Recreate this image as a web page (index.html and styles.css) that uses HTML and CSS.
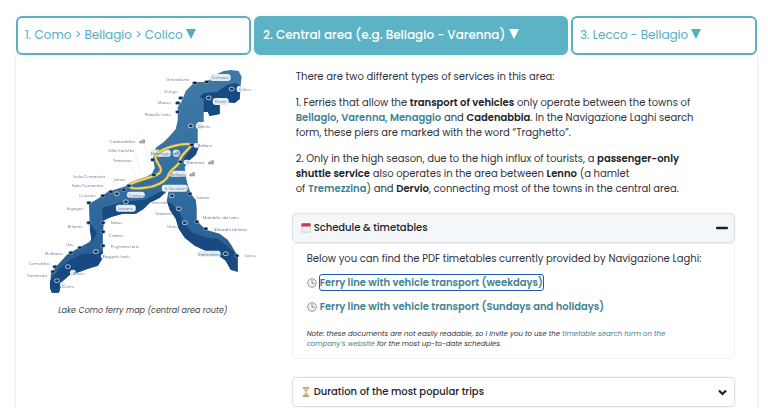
FILE: index.html
```html
<!DOCTYPE html>
<html lang="en">
<head>
<meta charset="utf-8">
<meta name="viewport" content="width=device-width, initial-scale=1">
<title>Lake Como ferry lines</title>
<link rel="stylesheet" href="styles.css">
</head>
<body>
<main class="page">
  <div class="tabs" role="tablist">
    <button class="tab" role="tab" aria-selected="false">1. Como &gt; Bellagio &gt; Colico <svg class="tri" viewBox="0 0 10 10" aria-hidden="true"><path d="M0 0H10L5 10Z"/></svg></button>
    <button class="tab active" role="tab" aria-selected="true">2. Central area (e.g. Bellagio - Varenna) <svg class="tri" viewBox="0 0 10 10" aria-hidden="true"><path d="M0 0H10L5 10Z"/></svg></button>
    <button class="tab" role="tab" aria-selected="false">3. Lecco - Bellagio <svg class="tri" viewBox="0 0 10 10" aria-hidden="true"><path d="M0 0H10L5 10Z"/></svg></button>
  </div>
  <section class="panel" role="tabpanel">
    <figure class="map">
      <svg viewBox="16 60 254 236" role="img" aria-label="Lake Como ferry map">
        <defs>
          <linearGradient id="water" x1="0" y1="0" x2="0" y2="1">
            <stop offset="0" stop-color="#3f7aa6"/>
            <stop offset=".5" stop-color="#336f9f"/>
            <stop offset="1" stop-color="#24588f"/>
          </linearGradient>
          <g id="pier"><rect x="-2.2" y="-1.5" width="4.4" height="3" rx="1.3" fill="#0c2450" stroke="#9cbad2" stroke-width=".6"/></g>
          <g id="ring"><rect x="-2.4" y="-1.8" width="4.8" height="3.6" rx="1.7" fill="#143766" stroke="#dce9f3" stroke-width=".8"/></g>
          <path id="car" d="M0 2V0.300H1.700L2.700-1H4.700V2Z" fill="#a9b8c8" stroke="#607791" stroke-width=".6"/>
        </defs>
        <path fill="url(#water)" d="M231 69L239 70L242 76L241 84L240 91L240 98L235 102L227 101L220 104V113L210 115L208 111H204V121H198V140L199 147L196 154L189 160L185 166L186 176L188 184L191 193L196 199L197 207L197 220L206 229L213 231L220 233L228 239L232 245L236 252L238 258L238 271L231 269L226 260L217 253L206 250L195 245L185 237L179 228L176 218L170 209L167 200L169 189L160 197L150 202L144 208L136 213H123L112 216L104 220L103 235L103 257L98 265L88 268L80 271L70 274L62 281L59 292H52L50 287L51 273L57 265L67 254L79 247L90 241L93 234L90 229L89 203L98 198L108 191L124 186L140 180L152 173L155 167L153 157L156 147L164 141L169 136L176 128L178 119V106L182 100L186 90L195 81H207L215 74L224 70Z"/>
        <path fill="#174a82" d="M241 85L240 98L235 102L227 101L220 104V113L210 115L208 111H204V98L200 96L204 92L217 91L227 84L236 82Z"/>
        <path fill="#184b83" d="M168 189L160 197L150 202L144 208L136 213H123L112 216L103 219L102 207L110 205L124 201L145 199L158 192Z"/>
        <path fill="#184b83" d="M184 158L192 146L199 145L196 154L188 161L185 166Z"/>
        <path fill="#184a81" d="M172 203L180 212L184 222L193 232L207 237L218 238L227 245L238 254V271L231 269L226 260L217 253L206 250L195 245L185 237L179 228L176 218L170 209L167 200Z"/>
        <path fill="#184a81" d="M103 250V257L98 265L88 268L80 271L70 274L62 281L59 292H52L50 287V280L61 267L70 259L83 253L95 253ZM91 223L97 233L92 241L90 230Z"/>
        <path d="M143 138L152 169M134 150L142 173M127 158L137 177M108 175L116 184M99 184L106 188" fill="none" stroke="#dce1e9" stroke-width=".5"/>
        <g fill="#e3edf6">
          <rect x="210" y="73" width="21" height="7" rx="3"/><rect x="213" y="97" width="16" height="7" rx="3"/>
          <rect x="237" y="85" width="5" height="6" rx="2"/><rect x="196" y="122" width="8" height="6" rx="3"/>
          <rect x="150" y="149" width="21" height="7" rx="3"/><rect x="173" y="149" width="7" height="7" rx="3"/>
          <rect x="169" y="170" width="18" height="6" rx="3"/><rect x="162" y="184" width="26" height="7" rx="3"/>
          <rect x="127" y="191" width="18" height="6" rx="3"/><rect x="116" y="204" width="20" height="7" rx="3"/>
          <rect x="198" y="250" width="23" height="6" rx="3"/><rect x="70" y="269" width="6" height="6" rx="3"/>
          <rect x="60" y="281" width="5" height="6" rx="3"/><rect x="101" y="253" width="5" height="5" rx="2"/>
          <rect x="194" y="142" width="6" height="5" rx="2"/><rect x="184" y="159" width="6" height="5" rx="2"/>
        </g>
        <g fill="none" stroke-linejoin="round">
          <path d="M192 143.500C181 142 164 147 157 153C152 159 162 164 161 170C161 176 135 179 130 184C127 188 137 188 145 187C156 186 165 181 168 176C169 169 177 167 180 161C179 154 191 148 192 143.500Z" stroke="#8f8a52" stroke-width="3"/>
          <path d="M192 143.500C181 142 164 147 157 153C152 159 162 164 161 170C161 176 135 179 130 184C127 188 137 188 145 187C156 186 165 181 168 176C169 169 177 167 180 161C179 154 191 148 192 143.500Z" stroke="#f4d35a" stroke-width="2"/>
        </g>
        <g>
          <use href="#pier" x="195" y="82"/><use href="#pier" x="207" y="81"/><use href="#pier" x="181" y="97"/><use href="#pier" x="178" y="102"/><use href="#pier" x="178" y="111"/>
          <use href="#ring" x="232" y="88"/><use href="#ring" x="209" y="97"/><use href="#ring" x="191" y="125"/>
          <use href="#pier" x="192" y="144"/><use href="#pier" x="153" y="159"/><use href="#pier" x="181" y="161"/><use href="#pier" x="154" y="174"/>
          <use href="#pier" x="129" y="185"/><use href="#pier" x="124" y="189"/><use href="#pier" x="111" y="191"/><use href="#ring" x="117" y="193"/><use href="#pier" x="103" y="195"/><use href="#pier" x="89" y="202"/><use href="#ring" x="126" y="201"/>
          <use href="#pier" x="89" y="222"/><use href="#pier" x="103" y="222"/><use href="#pier" x="103" y="231"/><use href="#pier" x="103" y="245"/><use href="#pier" x="80" y="247"/><use href="#pier" x="71" y="252"/><use href="#ring" x="96" y="251"/>
          <use href="#pier" x="55" y="266"/><use href="#pier" x="53" y="271"/><use href="#ring" x="68" y="266"/><use href="#ring" x="57" y="280"/>
          <use href="#ring" x="172" y="195"/><use href="#pier" x="190" y="193"/><use href="#ring" x="179" y="208"/><use href="#ring" x="185" y="222"/><use href="#pier" x="197" y="221"/><use href="#pier" x="206" y="228"/><use href="#ring" x="226" y="253"/><use href="#pier" x="237" y="255"/>
        </g>
        <g class="piers end">
          <text x="189" y="80">Gravedona</text><text x="178" y="92">Dongo</text><text x="171" y="103">Musso</text><text x="171" y="115">Pianello Lario</text>
          <text x="135" y="142">Cadenabbia</text><text x="134" y="151">Villa Carlotta</text><text x="132" y="161">Tremezzo</text><text x="126" y="180">Lenno</text>
          <text x="105" y="177">Isola Comacina</text><text x="103" y="186">Sala Comacina</text><text x="96" y="196">Colonno</text><text x="84" y="209">Argegno</text><text x="83" y="227">Brienno</text>
          <text x="74" y="245">Urio</text><text x="63" y="254">Moltrasio</text><text x="50" y="264">Cernobbio</text><text x="47" y="276">Tavernola</text>
          <text x="168" y="203">Limonta</text><text x="173" y="214">Vassena</text><text x="178" y="227">Onno</text>
        </g>
        <g class="piers">
          <text x="212" y="78">Domaso</text><text x="239" y="90">Colico</text><text x="215" y="102">Piona</text><text x="198" y="127">Dervio</text><text x="198" y="146">Bellano</text><text x="187" y="163">Varenna</text>
          <text x="151" y="154">Menaggio</text><text x="171" y="175">Bellagio</text><text x="165" y="189">S. Giovanni</text><text x="129" y="196">Campo</text><text x="118" y="209">Lezzeno</text>
          <text x="111" y="223">Nesso</text><text x="109" y="236">Careno</text><text x="111" y="247">Pognana Lario</text><text x="103" y="257">Faggeto Lario</text><text x="73" y="274">Blevio</text><text x="62" y="287">Como</text>
          <text x="197" y="198">Lierna</text><text x="203" y="218">Mandello del Lario</text><text x="214" y="230">Abbadia Lariana</text><text x="198" y="255">Valmadrera</text><text x="245" y="256">Lecco</text>
        </g>
        <use href="#car" x="140" y="140"/><use href="#car" x="209" y="161"/><use href="#car" x="190" y="173"/><use href="#car" x="174" y="152"/>
      </svg>
      <figcaption>Lake Como ferry map (central area route)</figcaption>
    </figure>
    <div class="content">
      <div class="copy">
        <p>There are two different types of services in this area:</p>
        <p>1. Ferries that allow the <strong>transport of vehicles</strong> only operate between the towns of <br><a href="#">Bellagio</a>, <a href="#">Varenna</a>, <a href="#">Menaggio</a> and <strong>Cadenabbia</strong>. In the Navigazione Laghi search <br>form, these piers are marked with the word “Traghetto”.</p>
        <p>2. Only in the high season, due to the high influx of tourists, a <strong>passenger-only <br>shuttle service</strong> also operates in the area between <strong>Lenno</strong> (a hamlet <br>of&nbsp;<a href="#">Tremezzina</a>) and <strong>Dervio</strong>, connecting most of the towns in the central area.</p>
      </div>
      <div class="accordion">
        <button class="head open" aria-expanded="true">
          <svg class="emoji" viewBox="0 0 10 10" aria-hidden="true"><rect x=".5" y=".5" width="9" height="9" rx="1" fill="#e4e6ec" stroke="#c9cdd6" stroke-width=".5"/><path d="M.5 3.500V1.200Q.5.300 1.500.300H8.500Q9.500.300 9.500 1.200V3.500Z" fill="#c33a50"/><path d="M2 5h6M2 7h6" stroke="#f8f9fc"/></svg>
          <span>Schedule &amp; timetables</span>
          <svg class="sign" viewBox="0 0 12 10" aria-hidden="true"><path d="M1 5H11" stroke="#1d2028" stroke-width="2.500" stroke-linecap="round"/></svg>
        </button>
        <div class="body">
          <p>Below you can find the PDF timetables currently provided by Navigazione Laghi:</p>
          <p class="line"><svg class="emoji" viewBox="0 0 10 10" aria-hidden="true"><circle cx="5" cy="5" r="4.300" fill="#edf0f4" stroke="#9298a3"/><path d="M5 2V5.300H7.500" fill="none" stroke="#777e8b" stroke-width=".8"/></svg><a class="focused" href="#">Ferry line with vehicle transport (weekdays)</a></p>
          <p class="line"><svg class="emoji" viewBox="0 0 10 10" aria-hidden="true"><circle cx="5" cy="5" r="4.300" fill="#edf0f4" stroke="#9298a3"/><path d="M5 2V5.300H7.500" fill="none" stroke="#777e8b" stroke-width=".8"/></svg><a href="#">Ferry line with vehicle transport (Sundays and holidays)</a></p>
          <p class="note">Note: these documents are not easily readable, so I invite you to use the <a href="#">timetable search form on the <br>company’s website</a> for the most up-to-date schedules.</p>
        </div>
      </div>
      <div class="accordion">
        <button class="head" aria-expanded="false">
          <svg class="emoji" viewBox="0 0 10 10" aria-hidden="true"><path d="M2.500 1H7.500C7.500 3 6.500 4 5.500 5C6.500 6 7.500 7 7.500 9H2.500C2.500 7 3.500 6 4.500 5C3.500 4 2.500 3 2.500 1Z" fill="#e7edf0" stroke="#b7c1c6" stroke-width=".5"/><path d="M3.200 2.500H6.800L5 5ZM5 5.500L7 8.500H3Z" fill="#e8ad35"/><path d="M1.700.800H8.300M1.700 9.200H8.300" stroke="#a58962" stroke-width="1.200"/></svg>
          <span>Duration of the most popular trips</span>
          <svg class="sign" viewBox="0 0 12 10" aria-hidden="true"><path d="M3 3.500L6.500 7L10 3.500" fill="none" stroke="#1d2028" stroke-width="2.200"/></svg>
        </button>
      </div>
    </div>
  </section>
</main>
</body>
</html>
```
FILE: styles.css
```css
* { box-sizing: border-box; }
body {
  margin: 0;
  background: #fff;
  color: #30323a;
  font-family: Poppins, Inter, "Liberation Sans", sans-serif;
  font-size: 10px;
  line-height: 15px;
}
p, figure { margin: 0; }
a { color: #3e8393; text-decoration: none; font-weight: 600; }
strong { font-weight: 600; color: #202229; }
button { font: inherit; text-align: left; }
.page { padding: 16px 11px 0 16px; }
.tabs { display: grid; grid-template-columns: 235fr 314fr 186fr; gap: 3px; }
.tab {
  padding: 9px 7px 10px;
  border: 2px solid #5bb0c1;
  border-radius: 6px;
  background: #fff;
  color: #54adbf;
  font-size: 12px;
  line-height: 16px;
  white-space: nowrap;
  box-shadow: 0 0 8px rgb(0 0 0 / 4%);
}
.tab.active { background: #5cb3c5; border-color: #5cb3c5; color: #fff; font-weight: 500; }
.tri { width: 10px; height: 10px; fill: currentColor; }
.panel {
  display: grid;
  grid-template-columns: 254fr 444fr;
  gap: 22px;
  min-height: calc(100vh - 55px);
  padding: 6px 22px 0 0;
  box-shadow: 0 1px 3px rgb(0 0 0 / 16%);
}
.map { text-align: center; }
.map svg { display: block; width: 100%; filter: blur(0.3px); }
figcaption { margin-top: 6px; font-size: 8px; font-style: italic; color: #444; }
.piers { font-size: 4px; fill: #71839a; }
.end { text-anchor: end; }
.copy { padding: 8px 4px 0; }
.copy p { margin-bottom: 11px; }
.accordion { margin-bottom: 18px; }
.accordion:last-child { margin-bottom: 0; }
.copy + .accordion { margin-top: 17px; }
.head {
  display: flex;
  align-items: center;
  gap: 3px;
  width: 100%;
  padding: 6px 6px 6px 8px;
  border: 1px solid #dce1e5;
  border-radius: 5px;
  background: #fff;
  color: #202229;
  font-weight: 500;
  line-height: 16px;
  box-shadow: 0 0 2px rgb(0 0 0 / 8%);
}
.open { background: #f3f7fa; }
.emoji { flex: none; width: 10px; height: 10px; }
.sign { width: 12px; height: 10px; margin-left: auto; }
.body {
  padding: 7px 14px 9px;
  border: 1px solid #edf0f3;
  border-radius: 5px;
}
.line { display: flex; align-items: center; gap: 3px; margin-top: 9px; }
.focused { outline: 1px solid #1f5ab0; border-radius: 2px; }
.note { margin-top: 15px; font-size: 7px; line-height: 10px; font-style: italic; }
.note a { font-weight: 400; }
```
